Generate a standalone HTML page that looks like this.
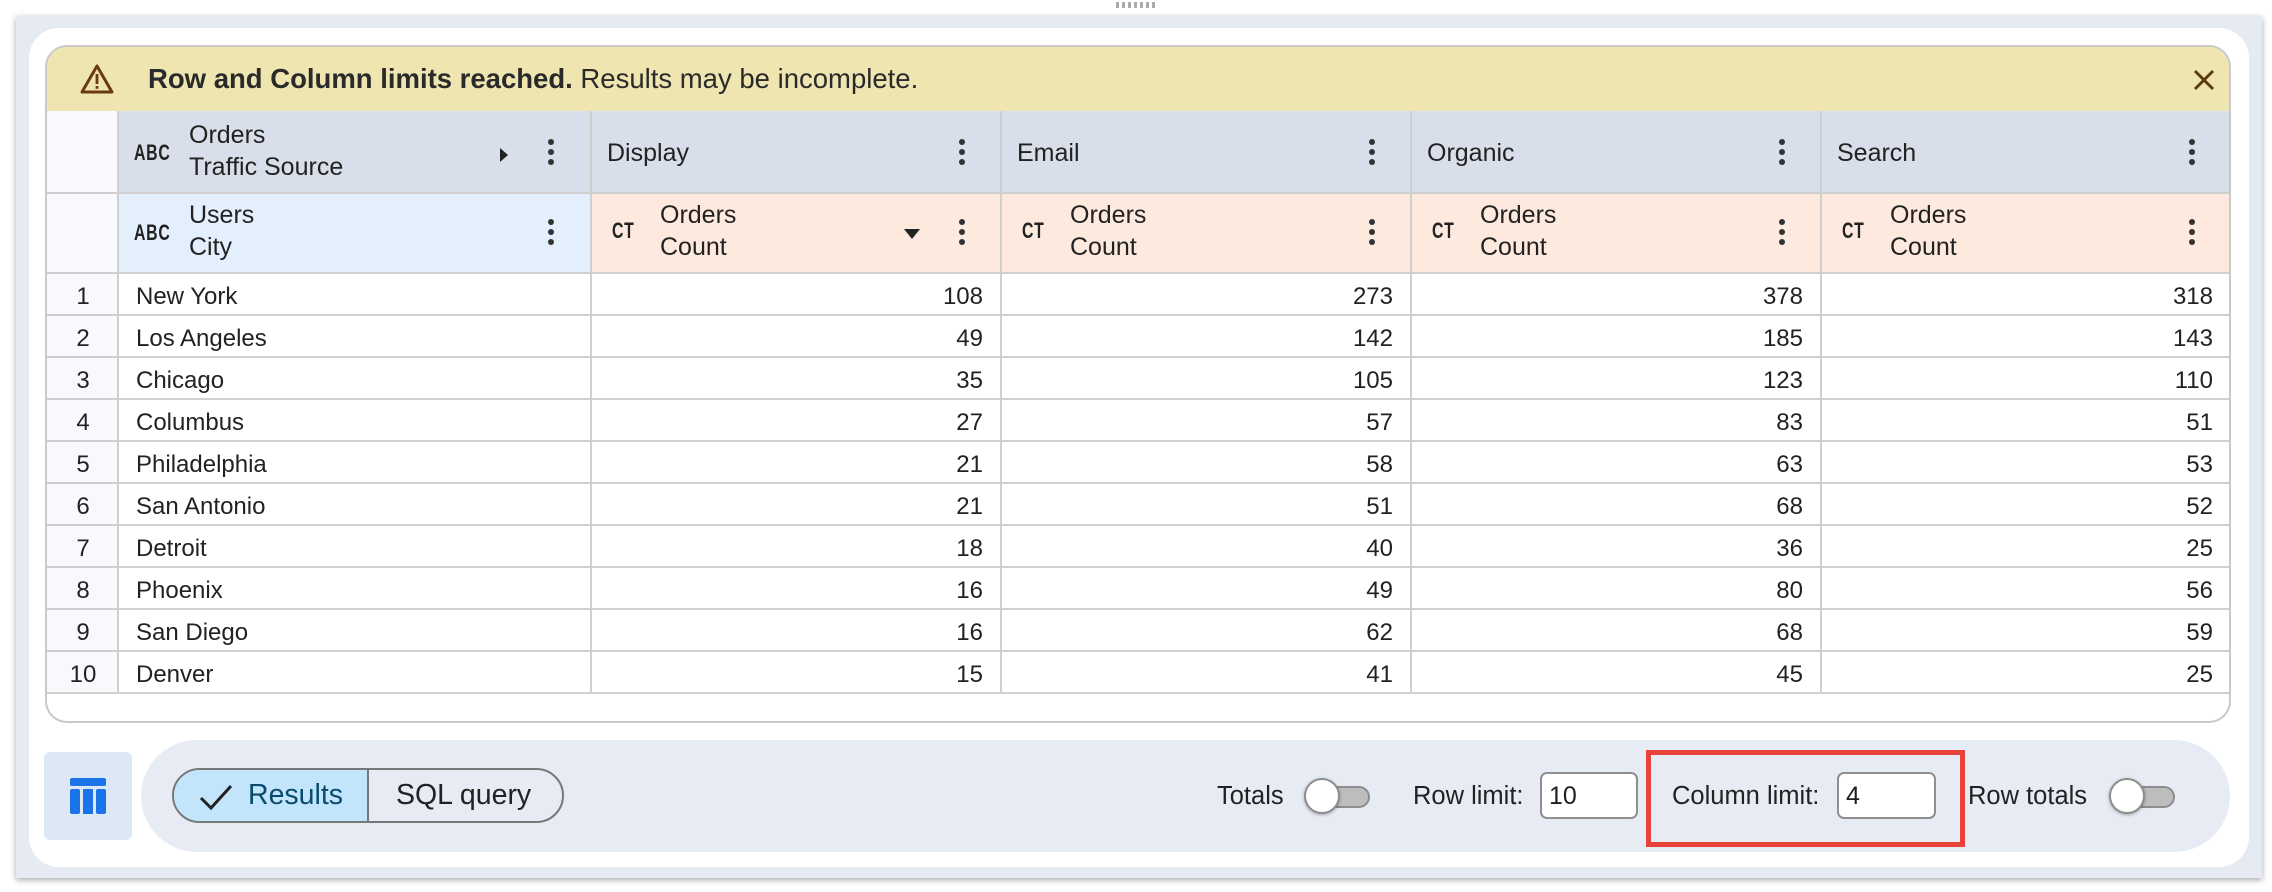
<!DOCTYPE html>
<html><head><meta charset="utf-8"><style>
*{box-sizing:border-box;margin:0;padding:0}
body{width:2272px;height:892px;background:#fff;font-family:"Liberation Sans",Arial,sans-serif;color:#1f1f1f;position:relative;overflow:hidden}
.abs{position:absolute}
#frame{left:16px;top:16px;width:2246px;height:862px;background:#e6ebf3;box-shadow:0 2px 6px rgba(0,0,0,.35);}
#panel{left:29px;top:28px;width:2220px;height:839px;background:#fff;border-radius:30px}
#table{left:45px;top:45px;width:2186px;height:678px;border:2px solid #c9c9c9;border-radius:22px;overflow:hidden;background:#fff}
.banner{left:0;top:0;width:100%;height:64px;background:#efe5b0;font-size:27.5px}
.cell{position:absolute;border-right:2px solid #cfcfcf;border-bottom:2px solid #cfcfcf}
.t{position:absolute;font-size:24px;line-height:32px;color:#222}
.h{font-size:25px}
.badge{position:absolute;font-size:22px;font-weight:bold;transform:scaleX(.72);transform-origin:left;color:#222;letter-spacing:1px}
.keb{position:absolute;width:6px}
.keb i{display:block;width:6px;height:6px;border-radius:3px;background:#333;margin-bottom:4px}
.toggle{position:absolute;width:70px;height:30px}
.toggle .tr{position:absolute;left:8px;top:5px;width:58px;height:22px;border-radius:11px;background:#bdbdbd;border:2px solid #8d8d8d}
.toggle .kn{position:absolute;left:0;top:-3px;width:36px;height:36px;border-radius:18px;background:#fff;border:2px solid #8d8d8d;box-shadow:0 1px 3px rgba(0,0,0,.3)}
.inp{position:absolute;height:47px;border:2px solid #8f8f8f;border-radius:7px;background:#fff;font-size:25px;padding:8px 7px}
.lbl{position:absolute;font-size:25.5px;color:#222}
</style></head><body>
<div class="abs" style="left:1116px;top:2px;width:40px;height:6px;background:repeating-linear-gradient(90deg,#aaa 0 3px,transparent 3px 6px)"></div>
<div id="frame" class="abs"></div>
<div id="panel" class="abs"></div>
<div id="table" class="abs">
 <div class="abs banner">
  <svg class="abs" style="left:32px;top:16px" width="36" height="32" viewBox="0 0 36 32"><path d="M18 3 L33 29 L3 29 Z" fill="none" stroke="#6b3a10" stroke-width="3" stroke-linejoin="round"/><rect x="16.6" y="11" width="2.8" height="10" fill="#6b3a10"/><rect x="16.6" y="23" width="2.8" height="2.8" fill="#6b3a10"/></svg>
  <div class="abs" style="left:101px;top:16px;color:#2a2a2a"><b>Row and Column limits reached.</b> Results may be incomplete.</div>
  <svg class="abs" style="left:2145px;top:21px" width="24" height="24" viewBox="0 0 24 24"><path d="M3 3 L21 21 M21 3 L3 21" stroke="#5a3a10" stroke-width="3"/></svg>
 </div>
 <div class="cell" style="left:0;top:64px;width:72px;height:83px;background:#f7f9fc"></div>
 <div class="cell" style="left:72px;top:64px;width:473px;height:83px;background:#d9dfea"></div>
 <div class="cell" style="left:545px;top:64px;width:410px;height:83px;background:#d9dfea"></div>
 <div class="cell" style="left:955px;top:64px;width:410px;height:83px;background:#d9dfea"></div>
 <div class="cell" style="left:1365px;top:64px;width:410px;height:83px;background:#d9dfea"></div>
 <div class="cell" style="left:1775px;top:64px;width:411px;height:83px;background:#d9dfea;border-right:none"></div>
 <div class="cell" style="left:0;top:147px;width:72px;height:80px;background:#f7f9fc"></div>
 <div class="cell" style="left:72px;top:147px;width:473px;height:80px;background:#e3effd"></div>
 <div class="cell" style="left:545px;top:147px;width:410px;height:80px;background:#fde9de"></div>
 <div class="cell" style="left:955px;top:147px;width:410px;height:80px;background:#fde9de"></div>
 <div class="cell" style="left:1365px;top:147px;width:410px;height:80px;background:#fde9de"></div>
 <div class="cell" style="left:1775px;top:147px;width:411px;height:80px;background:#fde9de;border-right:none"></div>
 <div class="badge" style="left:87px;top:93px">ABC</div>
 <div class="t h" style="left:142px;top:72px">Orders</div>
 <div class="t h" style="left:142px;top:104px">Traffic Source</div>
 <svg class="abs" style="left:452px;top:100px" width="10" height="16"><path d="M1 1 L9 8 L1 15Z" fill="#222"/></svg>
 <div class="keb" style="left:501px;top:92px"><i></i><i></i><i></i></div>
 <div class="t h" style="left:560px;top:90px">Display</div><div class="keb" style="left:912px;top:92px"><i></i><i></i><i></i></div>
 <div class="t h" style="left:970px;top:90px">Email</div><div class="keb" style="left:1322px;top:92px"><i></i><i></i><i></i></div>
 <div class="t h" style="left:1380px;top:90px">Organic</div><div class="keb" style="left:1732px;top:92px"><i></i><i></i><i></i></div>
 <div class="t h" style="left:1790px;top:90px">Search</div><div class="keb" style="left:2142px;top:92px"><i></i><i></i><i></i></div>
 <div class="badge" style="left:87px;top:173px">ABC</div>
 <div class="t h" style="left:142px;top:152px">Users</div>
 <div class="t h" style="left:142px;top:184px">City</div>
 <div class="keb" style="left:501px;top:172px"><i></i><i></i><i></i></div>
 <div class="badge" style="left:565px;top:171px">CT</div><div class="t h" style="left:613px;top:152px">Orders</div><div class="t h" style="left:613px;top:184px">Count</div>
 <svg class="abs" style="left:857px;top:182px" width="16" height="10"><path d="M0 0 L16 0 L8 10Z" fill="#222"/></svg>
 <div class="keb" style="left:912px;top:172px"><i></i><i></i><i></i></div>
 <div class="badge" style="left:975px;top:171px">CT</div><div class="t h" style="left:1023px;top:152px">Orders</div><div class="t h" style="left:1023px;top:184px">Count</div><div class="keb" style="left:1322px;top:172px"><i></i><i></i><i></i></div>
 <div class="badge" style="left:1385px;top:171px">CT</div><div class="t h" style="left:1433px;top:152px">Orders</div><div class="t h" style="left:1433px;top:184px">Count</div><div class="keb" style="left:1732px;top:172px"><i></i><i></i><i></i></div>
 <div class="badge" style="left:1795px;top:171px">CT</div><div class="t h" style="left:1843px;top:152px">Orders</div><div class="t h" style="left:1843px;top:184px">Count</div><div class="keb" style="left:2142px;top:172px"><i></i><i></i><i></i></div>
 <div id="rows"></div>
</div>
<div class="abs" style="left:44px;top:752px;width:88px;height:88px;background:#dde8f6;border-radius:6px"></div>
<svg class="abs" style="left:70px;top:778px" width="36" height="36" viewBox="0 0 36 36"><rect x="0" y="0" width="36" height="8" rx="2" fill="#1a73e8"/><rect x="0" y="11" width="10" height="25" rx="2" fill="#1a73e8"/><rect x="13" y="11" width="10" height="25" fill="#1a73e8"/><rect x="26" y="11" width="10" height="25" rx="2" fill="#1a73e8"/></svg>
<div class="abs" style="left:141px;top:740px;width:2089px;height:112px;background:#e6ebf4;border-radius:56px"></div>
<div class="abs" style="left:172px;top:768px;width:392px;height:55px;border:2px solid #777;border-radius:28px;overflow:hidden;background:#e6ebf4">
 <div class="abs" style="left:0;top:0;width:195px;height:51px;background:#c2e5fb;border-right:2px solid #777"></div>
 <svg class="abs" style="left:25px;top:14px" width="34" height="26"><path d="M2 14 L12 24 L32 2" fill="none" stroke="#222" stroke-width="3"/></svg>
 <div class="abs" style="left:74px;top:9px;font-size:28.5px;color:#0b4a6e">Results</div>
 <div class="abs" style="left:222px;top:9px;font-size:28.5px;color:#222">SQL query</div>
</div>
<div class="lbl" style="left:1217px;top:782px">Totals</div>
<div class="toggle" style="left:1304px;top:781px"><div class="tr"></div><div class="kn"></div></div>
<div class="lbl" style="left:1413px;top:782px">Row limit:</div>
<div class="inp" style="left:1540px;top:772px;width:98px">10</div>
<div class="abs" style="left:1646px;top:750px;width:319px;height:97px;border:5px solid #e8433a"></div>
<div class="lbl" style="left:1672px;top:782px">Column limit:</div>
<div class="inp" style="left:1837px;top:772px;width:99px">4</div>
<div class="lbl" style="left:1968px;top:782px">Row totals</div>
<div class="toggle" style="left:2109px;top:781px"><div class="tr"></div><div class="kn"></div></div>
<script>
var d=[["New York",108,273,378,318],["Los Angeles",49,142,185,143],["Chicago",35,105,123,110],["Columbus",27,57,83,51],["Philadelphia",21,58,63,53],["San Antonio",21,51,68,52],["Detroit",18,40,36,25],["Phoenix",16,49,80,56],["San Diego",16,62,68,59],["Denver",15,41,45,25]];
var h="";var L=[0,72,545,955,1365,1775],W=[72,473,410,410,410,411];
d.forEach(function(r,i){var y=227+42*i;
for(var c=0;c<6;c++){h+='<div class="cell" style="left:'+L[c]+'px;top:'+y+'px;width:'+W[c]+'px;height:42px;'+(c==0?'background:#f7f9fc;':'')+(c==5?'border-right:none;':'')+'"></div>';}
h+='<div class="t" style="left:0;width:72px;text-align:center;top:'+(y+7)+'px">'+(i+1)+'</div>';
h+='<div class="t" style="left:89px;top:'+(y+7)+'px">'+r[0]+'</div>';
for(var c=1;c<5;c++){h+='<div class="t" style="left:'+L[c+1]+'px;width:'+(410-19)+'px;text-align:right;top:'+(y+7)+'px">'+r[c]+'</div>';}
});
document.getElementById("rows").outerHTML=h;
</script>
</body></html>
